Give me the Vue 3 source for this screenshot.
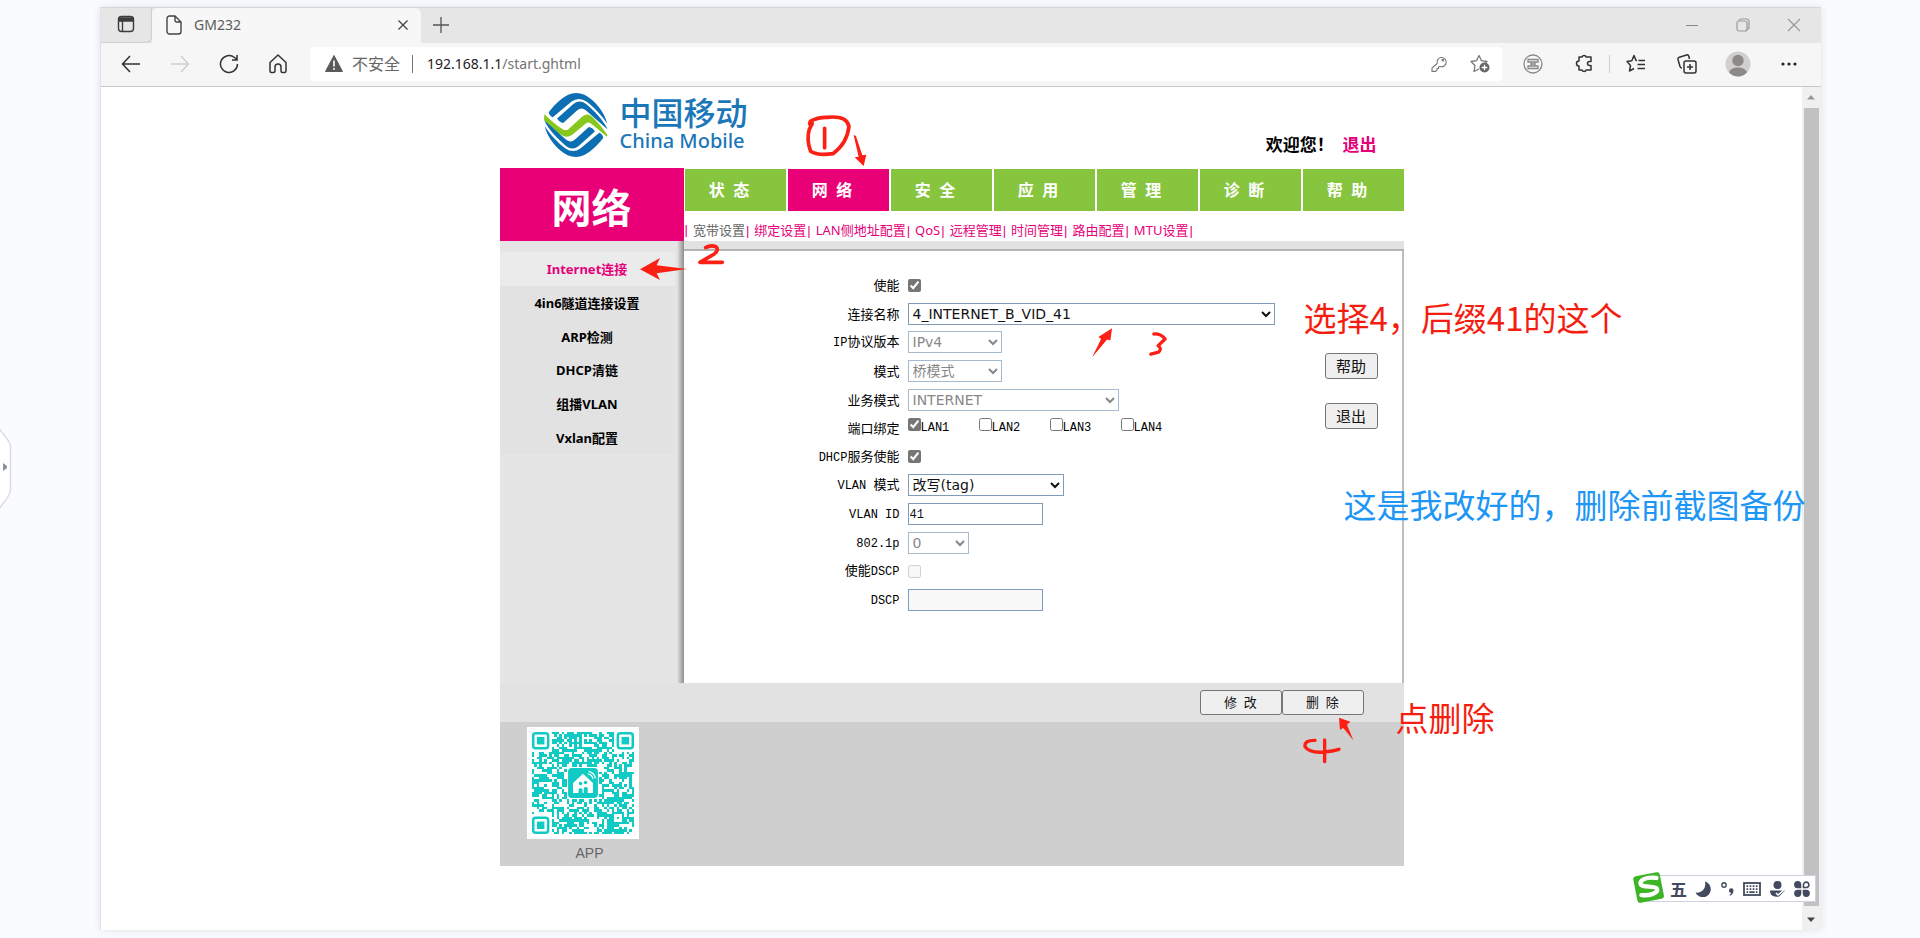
<script setup>
import { ref } from 'vue'

const address = ref('192.168.1.1/start.ghtml')
const tabs = ['状  态', '网  络', '安  全', '应  用', '管  理', '诊  断', '帮  助']
const activeTab = ref(1)
const subTabs = ['宽带设置', '绑定设置', 'LAN侧地址配置', 'QoS', '远程管理', '时间管理', '路由配置', 'MTU设置']
const sideItems = ['Internet连接', '4in6隧道连接设置', 'ARP检测', 'DHCP清链', '组播VLAN', 'Vxlan配置']

const rows = [
  { id: 'enable', label: [['使能']], kind: 'check', checked: true },
  { id: 'name', label: [['连接名称']], kind: 'select', value: '4_INTERNET_B_VID_41', size: 'full' },
  { id: 'ipver', label: [['IP', 1], ['协议版本']], kind: 'select', value: 'IPv4', size: 'small', disabled: true },
  { id: 'mode', label: [['模式']], kind: 'select', value: '桥模式', size: 'small', disabled: true },
  { id: 'service', label: [['业务模式']], kind: 'select', value: 'INTERNET', size: 'wide', disabled: true },
  { id: 'ports', label: [['端口绑定']], kind: 'ports' },
  { id: 'dhcp', label: [['DHCP', 1], ['服务使能']], kind: 'check', checked: true },
  { id: 'vlanmode', label: [['VLAN ', 1], ['模式']], kind: 'select', value: '改写(tag)', size: 'medium' },
  { id: 'vlanid', label: [['VLAN ID', 1]], kind: 'text', value: '41' },
  { id: 'prio', label: [['802.1p', 1]], kind: 'select', value: '0', size: 'tiny', disabled: true },
  { id: 'dscpon', label: [['使能'], ['DSCP', 1]], kind: 'check', checked: false, disabled: true },
  { id: 'dscp', label: [['DSCP', 1]], kind: 'text', value: '', disabled: true },
]
const ports = ['LAN1', 'LAN2', 'LAN3', 'LAN4']

// Module pattern of the app code: 41 x 41 with three finder squares.
const N = 41
function buildCode() {
  let seed = 20231
  const rnd = () => {
    seed = (seed * 1103515245 + 12345) % 2147483648
    return seed / 2147483648
  }
  let d = ''
  for (let y = 0; y < N; y++) {
    for (let x = 0; x < N; x++) {
      const on = rnd() < 0.56
      const finder = (x < 8 && y < 8) || (x > N - 9 && y < 8) || (x < 8 && y > N - 9)
      const logo = x > 13 && x < 27 && y > 13 && y < 27
      const ring = Math.max(Math.abs(x - 34), Math.abs(y - 34))
      const fill = ring <= 2 ? ring !== 1 : on
      if (fill && !finder && !logo) d += `M${x} ${y}h1v1h-1z`
    }
  }
  return d
}
const code = buildCode()
const finders = [[0, 0], [34, 0], [0, 34]]
</script>

<template>
  <div class="desk">
    <svg class="handle" width="12" height="86" viewBox="0 0 12 86" aria-hidden="true">
      <path d="M-2 0C0 6 9 12 10.500 20V64C9 74 0 78-2 86" fill="#fff" stroke="#dcdde3" stroke-width="1.500" />
      <path d="M3 37l4 3v2l-4 3z" fill="#8d8f9c" />
    </svg>

    <div class="window">
      <header class="titlebar">
        <button class="spaces" aria-label="Tab actions">
          <svg width="18" height="18" viewBox="0 0 18 18" fill="none" stroke="#3c3c3c" stroke-width="1.400">
            <rect x="1.500" y="1.500" width="15" height="15" rx="3" />
            <path d="M2 3h14v3H2z" fill="#3c3c3c" /><path d="M5.500 6v10" />
          </svg>
        </button>
        <div class="browser-tab">
          <svg width="16" height="20" viewBox="0 0 16 20" fill="none" stroke="#444" stroke-width="1.400">
            <path d="M3.500 1H9l6 6v9.500a2.500 2.500 0 0 1-2.500 2.500h-9A2.500 2.500 0 0 1 1 16.500v-13A2.500 2.500 0 0 1 3.500 1zM9 1v4.500A1.500 1.500 0 0 0 10.500 7H15" />
          </svg>
          <span class="tab-title">GM232</span>
          <button class="icon" aria-label="Close tab">
            <svg width="12" height="12" viewBox="0 0 12 12" stroke="#444" stroke-width="1.300"><path d="M1.500 1.500l9 9M10.500 1.500l-9 9" /></svg>
          </button>
        </div>
        <button class="icon new-tab" aria-label="New tab">
          <svg width="16" height="16" viewBox="0 0 16 16" stroke="#555" stroke-width="1.300"><path d="M0 8h16M8 0v16" /></svg>
        </button>
        <div class="win-controls">
          <button class="icon" aria-label="Minimize"><svg width="12" height="12" viewBox="0 0 12 12" stroke="#8a8a8a"><path d="M0 6.500h12" /></svg></button>
          <button class="icon" aria-label="Restore">
            <svg width="14" height="14" viewBox="0 0 14 14" fill="none" stroke="#9a9a9a" stroke-width="1.200"><rect x="1" y="3" width="10" height="10" rx="2" /><path d="M3 3c0-1 1-2 2-2h5.500A2.500 2.500 0 0 1 13 3.500V9c0 1-1 2-2 2" /></svg>
          </button>
          <button class="icon" aria-label="Close"><svg width="14" height="14" viewBox="0 0 14 14" stroke="#9a9a9a" stroke-width="1.200"><path d="M1 1l12 12M13 1L1 13" /></svg></button>
        </div>
      </header>

      <div class="toolbar">
        <button class="icon nav" aria-label="Back"><svg width="20" height="18" viewBox="0 0 20 18" fill="none" stroke="#333" stroke-width="1.500"><path d="M19 9H1.500M9 1L1.500 9 9 17" /></svg></button>
        <button class="icon nav" aria-label="Forward" disabled><svg width="20" height="18" viewBox="0 0 20 18" fill="none" stroke="#d0d0d0" stroke-width="1.500"><path d="M1 9h17.500M11 1l7.500 8L11 17" /></svg></button>
        <button class="icon nav" aria-label="Refresh"><svg width="20" height="20" viewBox="0 0 20 20" fill="none" stroke="#333" stroke-width="1.500"><path d="M18.500 10a8.500 8.500 0 1 1-3-6.500l2.500 2M18 1v5h-5" /></svg></button>
        <button class="icon nav" aria-label="Home"><svg width="18" height="20" viewBox="0 0 18 20" fill="none" stroke="#333" stroke-width="1.500" stroke-linejoin="round"><path d="M1 8.500L9 1l8 7.500V17a1.500 1.500 0 0 1-1.500 1.500h-2A1.500 1.500 0 0 1 12 17v-4a3 3 0 0 0-6 0v4a1.500 1.500 0 0 1-1.500 1.500h-2A1.500 1.500 0 0 1 1 17z" /></svg></button>

        <div class="address">
          <svg width="18" height="17" viewBox="0 0 18 17"><path d="M9 .5L17.500 16.500H.5z" fill="#5a5a5a" stroke="#5a5a5a" stroke-linejoin="round" /><path d="M9 5.500v6M9 13v1.700" stroke="#fff" stroke-width="1.600" /></svg>
          <label class="insecure" for="url">不安全</label>
          <span class="bar"></span>
          <div class="url-box">
            <input id="url" v-model="address" class="url" type="text" />
            <div class="url-text" aria-hidden="true"><b>192.168.1.1</b>/start.ghtml</div>
          </div>
          <button class="icon addr-btn" aria-label="Passwords">
            <svg width="16" height="16" viewBox="0 0 16 16" fill="none" stroke="#777" stroke-width="1.100"><path d="M6.200 7.500a4.600 4.600 0 1 1 3 3L7.500 11v1.500H6V14l-1.300 1.400H1V12z" /><circle cx="11.800" cy="4.200" r=".8" /></svg>
          </button>
          <button class="icon addr-btn" aria-label="Add to favorites">
            <svg width="20" height="19" viewBox="0 0 20 19" fill="none" stroke="#777" stroke-width="1.300" stroke-linejoin="round"><path d="M9 15l-5 2.500 1-6L1 7.500l5.500-.8L9 1.500l2.500 5.200 5.500.8-1.500 1.500" /><circle cx="14.500" cy="13.500" r="5" fill="#666" stroke="none" /><path d="M14.500 10.700v5.600M11.700 13.500h5.600" stroke="#fff" /></svg>
          </button>
        </div>

        <button class="icon tool" aria-label="Extension">
          <svg width="20" height="20" viewBox="0 0 20 20" fill="none" stroke="#888" stroke-width="1.300"><circle cx="10" cy="10" r="9" /><path d="M5 5.500h10v2.500H5zM5 12h10v2.500H5zM8 8v4M12 8v4M8 10h4" /></svg>
        </button>
        <button class="icon tool" aria-label="Extensions">
          <svg width="18" height="19" viewBox="0 0 18 19" fill="none" stroke="#333" stroke-width="1.500" stroke-linejoin="round"><path d="M4 3h3a2.200 2.200 0 0 1 4.200 0H16v4.500h-1.500a2 2 0 0 0 0 4H16V16h-4.800a2.200 2.200 0 0 1-4.200 0H4v-4a2.200 2.200 0 0 1 0-5z" /></svg>
        </button>
        <span class="tool-sep"></span>
        <button class="icon tool" aria-label="Favorites">
          <svg width="20" height="19" viewBox="0 0 20 19" fill="none" stroke="#333" stroke-width="1.500" stroke-linejoin="round"><path d="M11 6.500H10L8 1.500 5.800 6.700 1 7.500l3.500 4L3.500 17 8 14.500M12.500 6.500H19M11.500 10.500H19M11.500 14.500H19" /></svg>
        </button>
        <button class="icon tool" aria-label="Collections">
          <svg width="20" height="20" viewBox="0 0 20 20" fill="none" stroke="#333" stroke-width="1.500"><rect x="7" y="7" width="12" height="12" rx="2" /><path d="M13 10v6M10 13h6M5 14c-1 0-1.700-.6-2-1.500L1 5.500c-.3-1.200.4-2 1.300-2.300L9.500 1c1-.3 2 .2 2.300 1.200L12.500 5" /></svg>
        </button>
        <button class="icon tool" aria-label="Profile">
          <svg width="26" height="26" viewBox="0 0 26 26"><clipPath id="face"><circle cx="13" cy="13" r="12.500" /></clipPath><g clip-path="url(#face)"><path d="M0 0h26v26H0z" fill="#d2d0ce" /><circle cx="13" cy="9.500" r="5.700" fill="#8c8a88" /><ellipse cx="13" cy="21.500" rx="8.800" ry="5" fill="#8c8a88" /></g></svg>
        </button>
        <button class="icon tool" aria-label="Settings">
          <svg width="16" height="4" viewBox="0 0 16 4" fill="#222"><circle cx="2" cy="2" r="1.600" /><circle cx="8" cy="2" r="1.600" /><circle cx="14" cy="2" r="1.600" /></svg>
        </button>
      </div>

      <div class="viewport">
        <div class="router">
          <div class="brand-row">
            <div class="brand">
              <svg width="64" height="64" viewBox="0 0 190 190">
                <g fill="#0d6fb3">
                  <path d="M14 57C30 36 50 16 72 5Q95-5 120 5C150 20 180 56 188 92C172 66 146 40 126 25Q104 10 82 25L26 72Q16 68 14 57z" />
                  <path d="M39 76L88 32Q106 18 124 32C150 54 176 80 189 108C170 92 146 70 124 51Q111 41 98 52L57 89Q46 88 39 76z" />
                </g>
                <path d="M1 62C20 82 40 98 58 109Q66 113 74 106L114 70Q128 58 142 70C160 88 176 106 188 124L187 130C168 114 154 102 138 90Q131 84 123 91L84 124Q68 135 52 125C32 112 12 96 0 80z" fill="#86c81e" />
                <g fill="#0d6fb3" transform="rotate(180 95 95)">
                  <path d="M14 57C30 36 50 16 72 5Q95-5 120 5C150 20 180 56 188 92C172 66 146 40 126 25Q104 10 82 25L26 72Q16 68 14 57z" />
                  <path d="M39 76L88 32Q106 18 124 32C150 54 176 80 189 108C170 92 146 70 124 51Q111 41 98 52L57 89Q46 88 39 76z" />
                </g>
              </svg>
              <div class="brand-name"><span class="cn">中国移动</span><span class="en">China Mobile</span></div>
            </div>
            <div class="welcome">欢迎您！ <a href="#logout">退出</a></div>
          </div>

          <div class="panel">
            <aside class="side">
              <h1>网络</h1>
              <ul>
                <li v-for="(s, i) in sideItems" :key="s" :class="{ current: i === 0 }"><a href="#side">{{ s }}</a></li>
              </ul>
            </aside>
            <div class="content">
              <nav class="tabs">
                <a v-for="(t, i) in tabs" :key="t" href="#tab" :class="{ on: i === activeTab }" @click.prevent="activeTab = i">{{ t }}</a>
              </nav>
              <nav class="sub">
                <span class="pipe">|</span>
                <span v-for="(s, i) in subTabs" :key="s" class="sub-item"><a href="#sub" :class="{ here: i === 0 }">{{ s }}</a><span class="pipe">|</span></span>
              </nav>
              <div class="main">
                <form @submit.prevent>
                  <template v-for="r in rows" :key="r.id">
                    <label class="name" :for="r.id"><span v-for="(p, k) in r.label" :key="k" :class="{ latin: p[1] }">{{ p[0] }}</span></label>
                    <div class="field">
                      <input v-if="r.kind === 'check'" :id="r.id" type="checkbox" :checked="r.checked" :disabled="r.disabled" />
                      <select v-else-if="r.kind === 'select'" :id="r.id" :class="r.size" :disabled="r.disabled"><option>{{ r.value }}</option></select>
                      <input v-else-if="r.kind === 'text'" :id="r.id" type="text" :value="r.value" :disabled="r.disabled" />
                      <div v-else class="ports">
                        <label v-for="(p, i) in ports" :key="p"><input :id="i === 0 ? r.id : null" type="checkbox" :checked="i === 0" /><span class="latin">{{ p }}</span></label>
                      </div>
                    </div>
                  </template>
                </form>
                <div class="side-buttons"><button>帮助</button><button>退出</button></div>
              </div>
            </div>
          </div>

          <div class="actions"><button>修&nbsp; 改</button><button>删&nbsp; 除</button></div>

          <footer class="foot">
            <figure>
              <svg class="qr" width="112" height="112" viewBox="-2 -2 45 45">
                <path d="M-2-2h45v45h-45z" fill="#fff" />
                <path :d="code" fill="#10cbc4" shape-rendering="crispEdges" />
                <g v-for="f in finders" :key="f.join()" :transform="`translate(${f[0]} ${f[1]})`">
                  <rect x=".5" y=".5" width="6" height="6" rx="1" fill="#fff" stroke="#10cbc4" />
                  <rect x="2" y="2" width="3" height="3" fill="#10cbc4" />
                </g>
                <rect x="14.500" y="14.500" width="12" height="12" rx="1.500" fill="#10cbc4" />
                <path d="M16.500 20.500l4-3.700 4 3.700v4h-8z" fill="#fff" />
                <circle cx="19.500" cy="20.700" r=".7" fill="#10cbc4" /><circle cx="21.500" cy="20.300" r=".7" fill="#10cbc4" />
                <path d="M18.700 24.500v-1.500a1 1 0 0 1 1.600 0v1.500zM20.800 24.500v-2a1 1 0 0 1 1.600 0v2z" fill="#10cbc4" />
                <path d="M22.500 16.800a2.500 2.500 0 0 1 2 2M22.700 15.800a3.500 3.500 0 0 1 2.800 2.800" fill="none" stroke="#fff" stroke-width=".5" />
              </svg>
              <figcaption>APP</figcaption>
            </figure>
          </footer>

          <svg class="marks" viewBox="499 87 904 779" aria-hidden="true">
            <g transform="translate(480 80) scale(.3333)" fill="none" stroke="#fc1f14" stroke-width="11" stroke-linecap="round" stroke-linejoin="round">
              <path d="M986 132L988 124Q1010 111 1040 112Q1098 106 1104 140Q1098 190 1056 221Q1010 228 989 214Q976 180 985 148L994 130" />
              <path d="M1031 145V203" />
              <path d="M674 503Q690 494 704 500Q716 508 700 522L657 547L724 547" />
              <path d="M1118 165L1125 168L1144 226L1156 224L1148 258L1121 232L1133 230z" fill="#fc1f14" stroke="none" />
              <path d="M477 568L537 534L527 556L618 567L527 580L537 600z" fill="#fc1f14" stroke="none" />
            </g>
            <g transform="translate(780 260) scale(.3317)" fill="none" stroke="#fc1f14" stroke-width="10" stroke-linecap="round" stroke-linejoin="round">
              <path d="M938 293L965 238L957 232L998 206L993 243L983 240z" fill="#fc1f14" stroke="none" />
              <path d="M1124 223Q1146 222 1158 238L1137 258Q1150 268 1138 278L1115 284" />
            </g>
            <g transform="translate(1180 660) scale(.3333)" fill="none" stroke="#fc1f14" stroke-width="10" stroke-linecap="round" stroke-linejoin="round">
              <path d="M474 173L508 185L498 194L517 241L487 204L477 209z" fill="#fc1f14" stroke="none" />
              <path d="M402 241Q370 240 372 260Q385 280 430 276Q455 274 474 268M431 240V305" />
            </g>
          </svg>
          <p class="note pick">选择4，后缀41的这个</p>
          <p class="note backup">这是我改好的，删除前截图备份</p>
          <p class="note remove">点删除</p>
        </div>

        <div class="scroll">
          <svg width="10" height="6" viewBox="0 0 10 6"><path d="M1 5.500L5 1l4 4.500z" fill="#9a9a9a" /></svg>
          <div class="thumb"></div>
          <svg width="10" height="6" viewBox="0 0 10 6"><path d="M1 .5L5 5 9 .5z" fill="#444" /></svg>
        </div>
      </div>

      <div class="ime">
        <svg class="ime-logo" width="34" height="33" viewBox="0 0 34 33">
          <g transform="rotate(-11 17 16)"><rect x="3" y="3" width="27" height="27" rx="3" fill="#3db527" /><path d="M26 8.500C15 5 8 8 9.500 12S24 15.500 24.500 19.500 16 25 8 22.500" fill="none" stroke="#fff" stroke-width="4.400" stroke-linecap="round" /></g>
        </svg>
        <span class="wu">五</span>
        <svg width="16" height="16" viewBox="0 0 16 16" fill="#434a60"><path d="M10 .5a8 8 0 1 1-9.500 11C6.500 12.500 11.500 7.500 10 .5z" /></svg>
        <svg width="15" height="16" viewBox="0 0 15 16"><circle cx="4" cy="4" r="2.200" fill="none" stroke="#434a60" stroke-width="1.400" /><path d="M9.500 14c1.500-.8 1.600-1.500 1.500-2.200A2.300 2.300 0 1 1 13.500 9.500c0 2.500-1.300 4.500-3.500 5.300z" fill="#434a60" /></svg>
        <svg width="18" height="14" viewBox="0 0 18 14" fill="none" stroke="#434a60" stroke-width="1.800"><rect x="1" y="1" width="16" height="12" /><path d="M3.500 4.200h11M3.500 7.200h11" stroke-dasharray="1.700 1.400" /><path d="M3.500 10.200h1.700M6.300 10.200h5.400M12.800 10.200h1.700" /></svg>
        <svg width="16" height="16" viewBox="0 0 16 16" fill="#434a60"><circle cx="7.500" cy="4" r="4" /><path d="M0 9.500h15L9 15.500C3 16.500 0 14 0 9.500z" /><path d="M6 12l2 2 6-5" fill="none" stroke="#fff" stroke-width="1.500" /></svg>
        <svg width="16" height="16" viewBox="0 0 16 16" fill="#434a60"><path d="M7.300 7.300H3.700A3.600 3.600 0 1 1 7.300 3.700zM7.300 8.700v3.600a3.600 3.600 0 1 1-3.600-3.600zM8.700 8.700h3.600a3.600 3.600 0 1 1-3.600 3.600z" /><path d="M9.500 6.500V4A2.700 2.700 0 1 1 12 6.500z" fill="none" stroke="#434a60" stroke-width="1.600" /></svg>
      </div>
    </div>
  </div>
</template>

<style>
body {
  margin: 0;
  background: #fafbff;
}
</style>

<style scoped>
* {
  box-sizing: border-box;
}
.desk {
  position: relative;
  display: flex;
  min-height: 100vh;
  padding: 7px 99px 8px 100px;
  font-family: "Noto Sans", "Noto Sans CJK SC", sans-serif;
}
.handle {
  position: absolute;
  left: 0;
  top: 426px;
}
button {
  font-family: inherit;
  margin: 0;
}
a {
  text-decoration: none;
  color: inherit;
}
.window {
  position: relative;
  flex: 1;
  display: flex;
  flex-direction: column;
  background: #fff;
  border-left: 1px solid #e2e2e4;
  box-shadow: 0 0 8px rgba(60, 60, 90, 0.13);
}
.icon {
  display: flex;
  align-items: center;
  justify-content: center;
  padding: 0;
  border: 0;
  background: none;
}
.titlebar {
  display: flex;
  height: 36px;
  background: #e6e6e6;
  border-top: 1px solid #d6d6d6;
}
.spaces {
  width: 51px;
  padding: 2px 0 0;
  border: 0;
  border-right: 1px solid #cfcfcf;
  border-bottom: 1px solid #cfcfcf;
  border-radius: 0 0 6px 0;
  background: #e6e6e6;
}
.browser-tab {
  display: flex;
  align-items: center;
  width: 269px;
  padding: 0 12px 2px 14px;
  background: #f7f7f7;
  border-radius: 6px 6px 0 0;
}
.tab-title {
  flex: 1;
  margin-left: 12px;
  font-size: 14px;
  line-height: 20px;
  color: #5c5c5c;
}
.new-tab {
  width: 40px;
  padding-bottom: 2px;
}
.win-controls {
  display: flex;
  margin-left: auto;
  padding: 0 2px 2px 0;
}
.win-controls .icon {
  width: 51px;
}
.toolbar {
  display: flex;
  align-items: center;
  height: 44px;
  padding: 0 7px 2px 5px;
  background: #f6f6f6;
  border-bottom: 1px solid #c8c8c8;
}
.nav {
  width: 49px;
  height: 36px;
}
.tool {
  width: 51px;
  height: 36px;
}
.tool-sep {
  width: 1px;
  height: 18px;
  background: #cfcfcf;
}
.address {
  flex: 1;
  display: flex;
  align-items: center;
  height: 34px;
  margin: 0 5px 0 8px;
  padding: 0 2px 0 15px;
  background: #fff;
  border-radius: 4px;
}
.insecure {
  margin-left: 9px;
  font-size: 16px;
  line-height: 24px;
  color: #666;
}
.bar {
  width: 1px;
  height: 18px;
  margin: 0 14px 0 12px;
  background: #777;
}
.url-box {
  flex: 1;
  position: relative;
  font-size: 14px;
  line-height: 24px;
}
.url {
  width: 100%;
  height: 24px;
  padding: 0;
  border: 0;
  outline: 0;
  background: none;
  font: inherit;
  color: transparent;
}
.url-text {
  position: absolute;
  inset: 0;
  color: #737373;
  pointer-events: none;
}
.url-text b {
  font-weight: 400;
  color: #222;
}
.addr-btn {
  width: 41px;
  height: 30px;
}
.viewport {
  flex: 1;
  display: flex;
}
.router {
  position: relative;
  width: 904px;
  margin: 0 auto;
}
.brand-row {
  display: flex;
  justify-content: space-between;
  height: 81px;
  padding: 6px 27px 0 44px;
}
.brand {
  display: flex;
  gap: 12px;
}
.brand-name {
  display: flex;
  flex-direction: column;
  color: #1c77b8;
}
.cn {
  font-family: "Noto Sans CJK SC", sans-serif;
  font-size: 32px;
  font-weight: 500;
  line-height: 36px;
}
.en {
  font-size: 20px;
  font-weight: 500;
  line-height: 24px;
}
.welcome {
  margin-top: 38px;
  font-family: "Noto Sans CJK SC", sans-serif;
  font-size: 17px;
  line-height: 26px;
  font-weight: 700;
}
.welcome a {
  margin-left: 5px;
  color: #e6007a;
}
.panel {
  display: flex;
}
.side {
  width: 184px;
  background: linear-gradient(to left, #8e8e8e, #e5e5e5 7px);
}
.side h1 {
  margin: 0 0 11px;
  height: 73px;
  padding-top: 8px;
  background: #e90077;
  color: #fff;
  font-size: 40px;
  line-height: 64px;
  font-weight: 700;
  text-align: center;
}
.side ul {
  display: grid;
  grid-auto-rows: 1fr;
  min-height: 202px;
  margin: 0 9px 0 0;
  padding: 0;
  list-style: none;
  font-size: 13px;
  font-weight: 700;
  text-align: center;
}
.side li {
  display: flex;
  align-items: center;
  justify-content: center;
  background: #e2e2e2;
}
.side li.current {
  background: #ebebeb;
  color: #e6007a;
}
.content {
  flex: 1;
  display: flex;
  flex-direction: column;
}
.tabs {
  display: grid;
  grid-template-columns: repeat(7, 1fr);
  gap: 2px;
  padding: 1px 0 0 1px;
}
.tabs a {
  height: 42px;
  padding-right: 12px;
  background: #87c53f;
  color: #fff;
  font-size: 16px;
  font-weight: 700;
  line-height: 42px;
  text-align: center;
  white-space: pre;
}
.tabs a.on {
  background: #e90077;
}
.sub {
  display: flex;
  height: 30px;
  color: #e6007a;
  font-size: 13px;
  line-height: 38px;
}
.sub-item {
  margin-left: 5px;
}
.sub .here {
  color: #666;
}
.pipe {
  padding-left: 1px;
  font-family: "Liberation Sans", sans-serif;
}
.main {
  display: flex;
  flex: 1;
  min-height: 442px;
  border-top: 8px solid #e2e2e2;
  box-shadow: inset 0 2px #b4b4b4, inset -2px 0 #bdbdbd;
  padding: 22px 26px 69px 0;
}
form {
  flex: 1;
  display: grid;
  grid-template-columns: 216px 1fr;
  grid-auto-rows: 1fr;
  column-gap: 8px;
  align-items: center;
  min-height: 343px;
}
.name {
  font-family: "Noto Sans CJK SC", sans-serif;
  font-size: 13px;
  line-height: 20px;
  text-align: right;
  white-space: pre;
}
.latin {
  font-family: "Liberation Mono", monospace;
  font-size: 12px;
}
.field {
  display: flex;
  align-items: center;
}
input[type="checkbox"] {
  width: 13px;
  height: 13px;
  margin: 0;
  accent-color: #767676;
}
select,
input[type="text"]:not(.url) {
  height: 22px;
  border: 1px solid #7f9db9;
  border-radius: 0;
  background: #fff;
  color: #111;
  font-family: "DejaVu Sans", "Noto Sans CJK SC", sans-serif;
  font-size: 14px;
}
select:disabled {
  color: #555;
}
input[type="text"]:not(.url) {
  width: 135px;
  padding: 2px 1px 0;
  font-family: "Liberation Mono", monospace;
  font-size: 12px;
}
input[type="text"]:not(.url):disabled {
  background: #f8f8f8;
}
.full {
  width: 367px;
}
.small {
  width: 94px;
}
.wide {
  width: 211px;
}
.medium {
  width: 156px;
}
.tiny {
  width: 61px;
}
.ports {
  display: flex;
}
.ports label {
  display: flex;
  width: 71px;
  line-height: 20px;
}
.side-buttons {
  display: flex;
  flex-direction: column;
  gap: 24px;
  padding-top: 82px;
}
.side-buttons button,
.actions button {
  border: 1px solid #767676;
  border-radius: 3px;
  background: #efefef;
  color: #111;
  padding: 0;
}
.side-buttons button {
  width: 53px;
  height: 26px;
  font-size: 15px;
  line-height: 22px;
}
.actions {
  display: flex;
  justify-content: flex-end;
  padding: 7px 40px;
  background: #e2e2e2;
}
.actions button {
  width: 82px;
  height: 25px;
  padding-bottom: 2px;
  font-size: 13px;
  line-height: 20px;
}
.foot {
  background: #cfcfcf;
  padding: 5px 27px 2px;
}
figure {
  width: 112px;
  margin: 0;
}
.qr {
  display: block;
}
figcaption {
  padding: 4px 0 0 14px;
  font-family: "Liberation Sans", sans-serif;
  font-size: 14px;
  line-height: 21px;
  color: #666;
  text-align: center;
}
.marks {
  position: absolute;
  left: 0;
  top: 0;
  width: 904px;
  overflow: visible;
  pointer-events: none;
}
.note {
  position: absolute;
  margin: 0;
  font-family: "Noto Sans CJK SC", sans-serif;
  font-size: 33px;
  font-weight: 400;
  line-height: 40px;
  color: #f51d10;
  white-space: nowrap;
}
.pick {
  left: 804px;
  top: 210px;
}
.backup {
  left: 844px;
  top: 397px;
  color: #1e96f5;
}
.remove {
  left: 896px;
  top: 610px;
}
.scroll {
  display: flex;
  flex-direction: column;
  align-items: center;
  gap: 8px;
  width: 19px;
  padding: 7px 2px 7px 1px;
  background: #f0f0f0;
}
.thumb {
  width: 15px;
  flex: 1;
  margin-bottom: 3px;
  background: #c1c1c1;
}
.ime {
  position: absolute;
  right: 5px;
  bottom: 28px;
  display: flex;
  align-items: center;
  justify-content: space-between;
  width: 171px;
  height: 27px;
  padding: 0 5px 0 24px;
  background: #fff;
  border: 1px solid #cfd2dc;
}
.ime-logo {
  position: absolute;
  left: -14px;
  top: -5px;
}
.wu {
  font-family: "Noto Sans CJK SC", sans-serif;
  font-size: 17px;
  font-weight: 700;
  line-height: 24px;
  color: #434a60;
}
</style>
